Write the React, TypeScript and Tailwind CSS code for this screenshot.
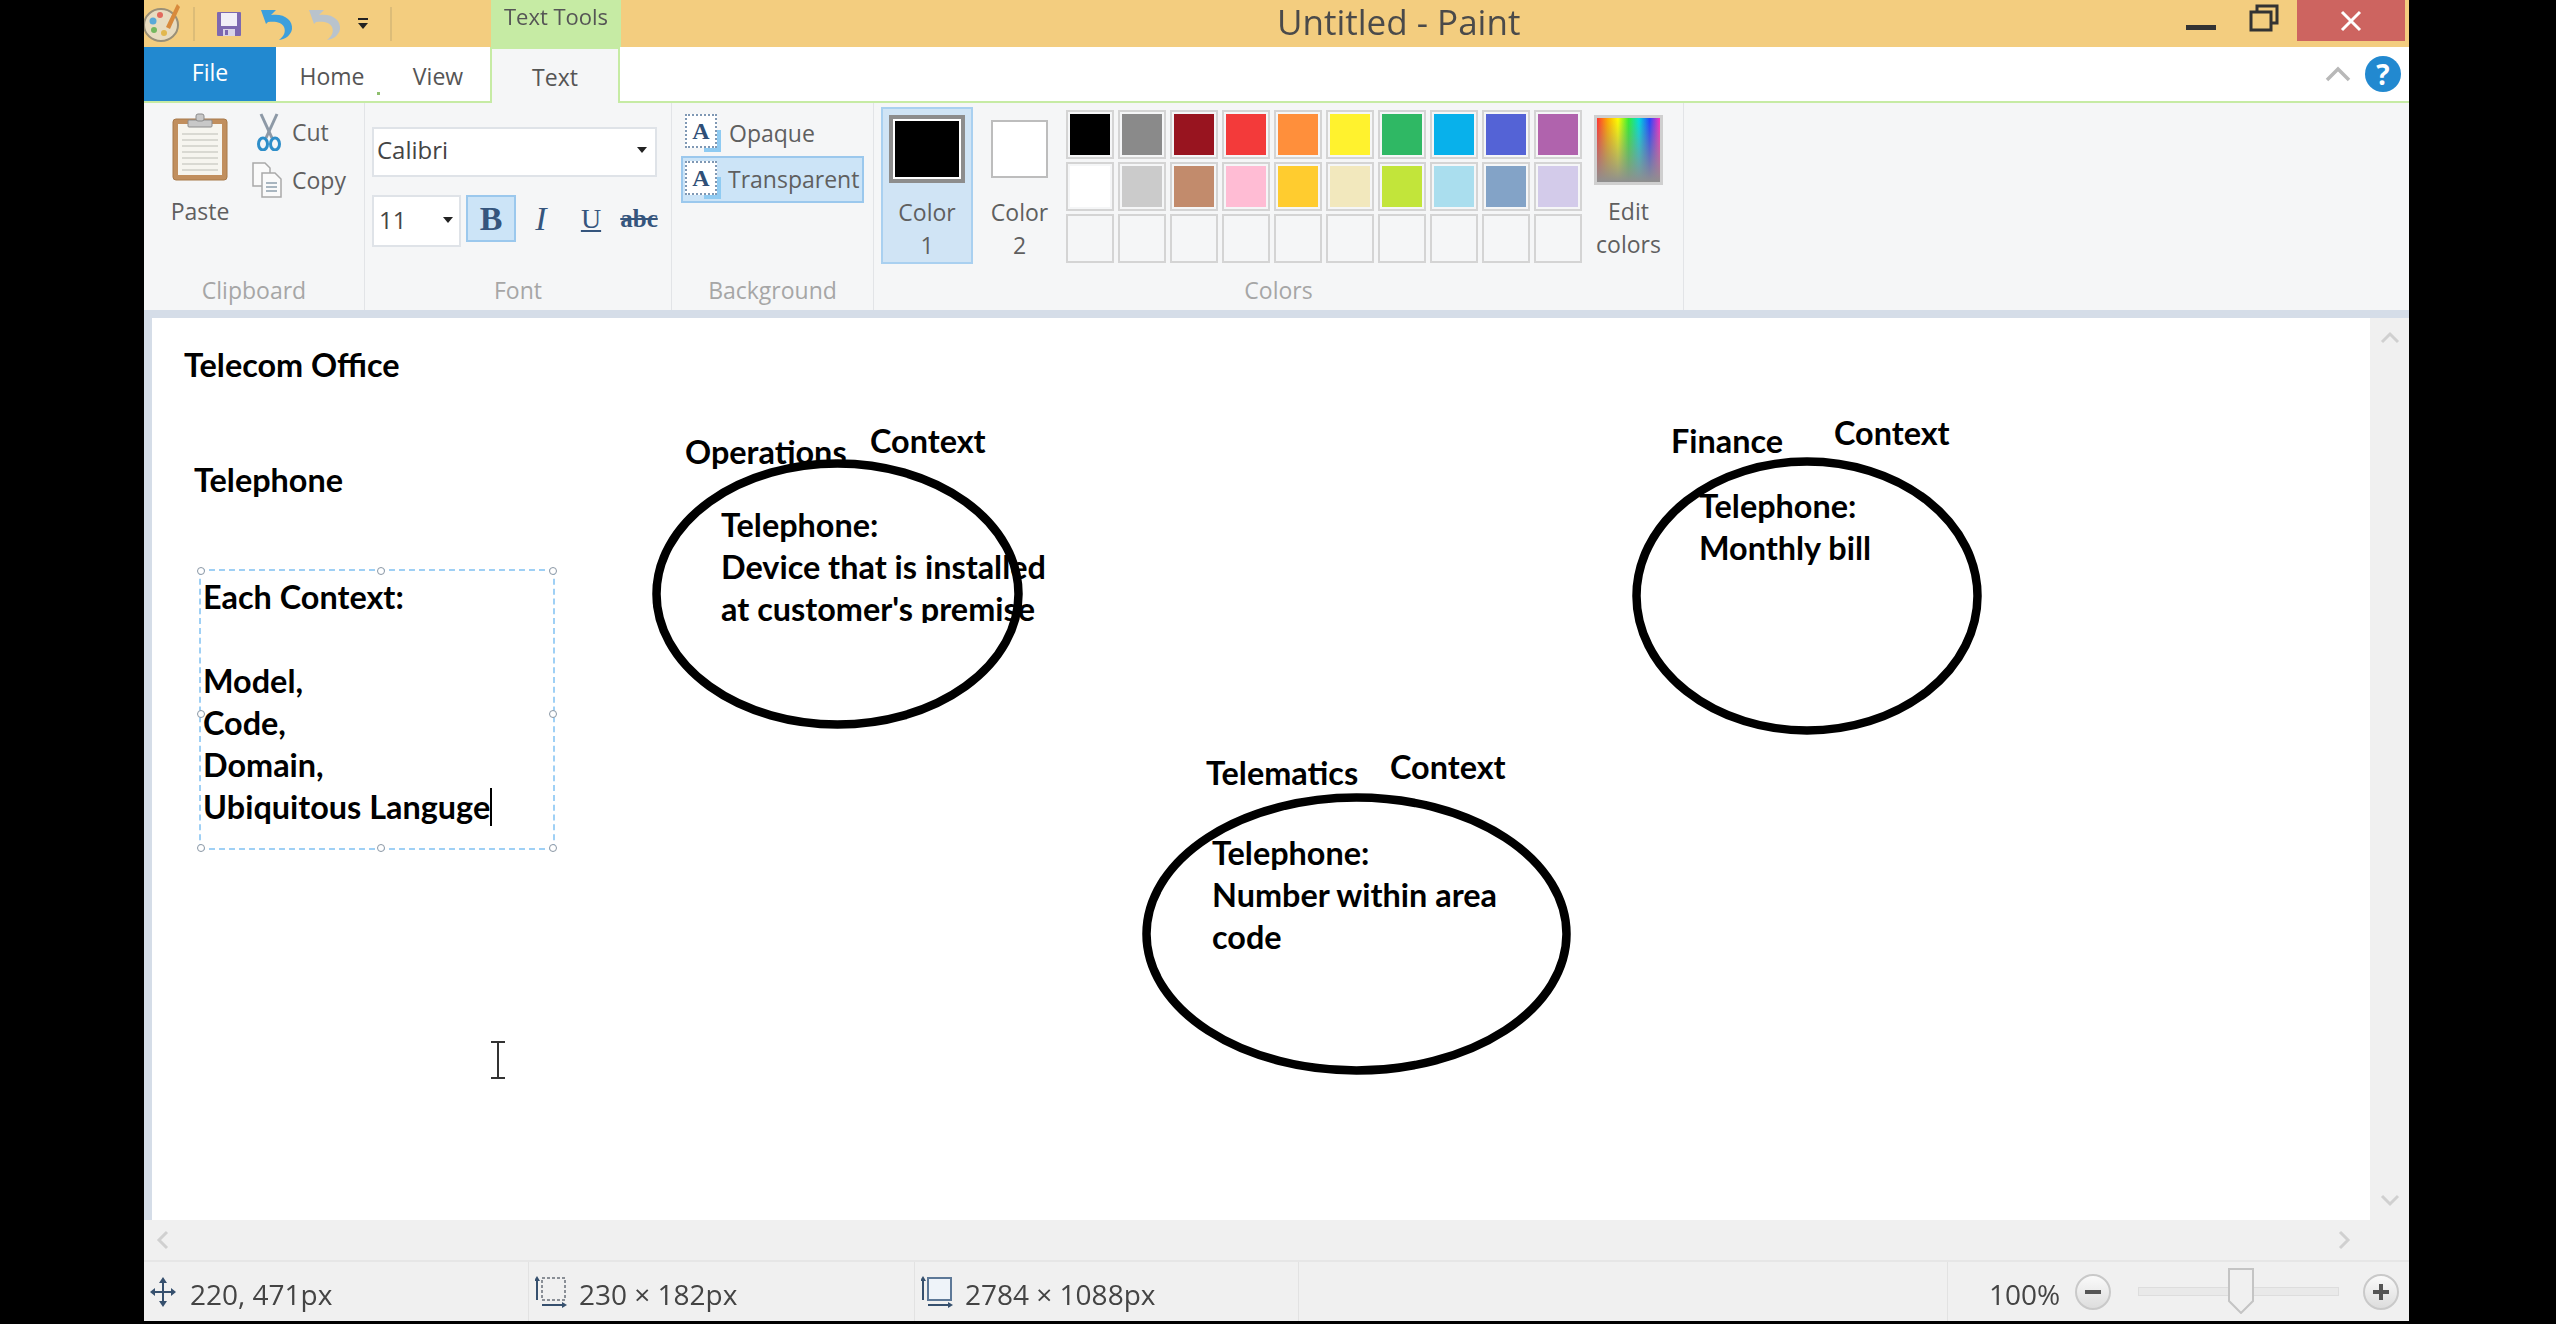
const UI_FONT = { fontFamily: '"Open Sans", "Noto Sans", sans-serif' };

const PALETTE = [
  ["#000000", "#8a8a8a", "#98141f", "#f33a3a", "#ff8f3b", "#fff22e", "#2fb864", "#08b1eb", "#5463d6", "#b063ad"],
  ["#ffffff", "#cbcbcb", "#c28b6c", "#ffbcd4", "#ffcc2f", "#f2e8bd", "#c2e53a", "#aadeee", "#83a3c7", "#d3cbea"],
  Array(10).fill("#f5f6f7") as string[],
];

function PaletteIcon() {
  return (
    <svg width="38" height="44" viewBox="0 0 38 44" className="mt-[-2px]">
      <ellipse cx="17" cy="24" rx="17" ry="16" fill="#e8dcc0" stroke="#9a9078" strokeWidth="2" />
      <circle cx="9" cy="20" r="3.5" fill="#5aa9d8" />
      <circle cx="16" cy="14" r="3" fill="#e26a5c" />
      <circle cx="10" cy="29" r="3" fill="#75b85e" />
      <circle cx="20" cy="32" r="3" fill="#e2b84e" />
      <path d="M33 3 L22 26 L26 28 L36 6 Z" fill="#d88a3c" />
    </svg>
  );
}

function SaveIcon() {
  return (
    <svg width="26" height="26" viewBox="0 0 26 26">
      <rect x="1" y="1" width="24" height="24" rx="1" fill="#7d68b0" />
      <rect x="5" y="2" width="16" height="13" fill="#f1eef8" />
      <rect x="7" y="18" width="12" height="7" fill="#d9d3e8" />
      <rect x="9" y="19" width="3" height="5" fill="#7d68b0" />
    </svg>
  );
}

function UndoIcon({ color }: { color: string }) {
  return (
    <svg width="34" height="34" viewBox="0 0 34 34">
      <path d="M1 3 L16 3 L11 8 C24 6 33 13 32 22 C31 28 26 32 19 33 C24 29 26 25 24 20 C22 15 15 14 8 15 L6 17 Z" fill={color} />
    </svg>
  );
}

function ClipboardIcon() {
  return (
    <svg width="56" height="68" viewBox="0 0 56 68">
      <rect x="1" y="6" width="54" height="61" rx="3" fill="#c18f5e" stroke="#a87a4b" />
      <rect x="6" y="11" width="44" height="51" fill="#f6f5ef" />
      {[20, 26, 32, 38, 44, 50, 56].map((y) => (
        <rect key={y} x="10" y={y} width="36" height="2" fill="#d9d9d2" />
      ))}
      <rect x="16" y="7" width="24" height="7" rx="1" fill="#c8c8c8" stroke="#8c8c8c" />
      <rect x="24" y="1" width="8" height="7" rx="2" fill="#c8c8c8" stroke="#8c8c8c" />
    </svg>
  );
}

function ScissorsIcon() {
  return (
    <svg width="26" height="38" viewBox="0 0 26 38" fill="none">
      <path d="M5 1 L16 25" stroke="#8d99a6" strokeWidth="3" />
      <path d="M21 1 L10 25" stroke="#8d99a6" strokeWidth="3" />
      <ellipse cx="7" cy="31" rx="4.5" ry="6" stroke="#2e8ec9" strokeWidth="3" />
      <ellipse cx="19" cy="31" rx="4.5" ry="6" stroke="#2e8ec9" strokeWidth="3" />
    </svg>
  );
}

function CopyIcon() {
  return (
    <svg width="30" height="36" viewBox="0 0 30 36" fill="#fafafa" stroke="#a9a9a9" strokeWidth="1.5">
      <path d="M1 1 H13 L18 6 V24 H1 Z" />
      <path d="M10 11 H23 L29 17 V35 H10 Z" />
      <path d="M14 21 H25 M14 25 H25 M14 29 H25" stroke="#8fa0ad" />
    </svg>
  );
}

function BackgroundIcon() {
  return (
    <div className="relative w-[36px] h-[38px] shrink-0">
      <div className="absolute right-0 bottom-0 w-[17px] h-[22px] bg-[#8fcbf2]" />
      <div className="absolute left-0 top-0 w-[32px] h-[34px] border-2 border-dotted border-[#7f98b4] bg-[#ffffff] flex items-center justify-center text-[24px] leading-none font-bold text-[#2f4f77]" style={{ fontFamily: '"Liberation Serif", serif' }}>
        A
      </div>
    </div>
  );
}

function MoveIcon() {
  return (
    <svg width="26" height="30" viewBox="0 0 26 30" fill="#36506e">
      <rect x="12" y="4" width="2" height="22" />
      <rect x="2" y="14" width="22" height="2" />
      <path d="M13 0 L17 6 H9 Z M13 30 L9 24 H17 Z M0 15 L5 11 V19 Z M26 15 L21 19 V11 Z" />
    </svg>
  );
}

function SizeIcon({ dashed }: { dashed?: boolean }) {
  return (
    <svg width="32" height="32" viewBox="0 0 32 32" fill="none">
      <rect x="7" y="2" width="23" height="22" fill={dashed ? "none" : "#eef3f9"} stroke={dashed ? "#8a8f96" : "#5d7897"} strokeWidth="2" strokeDasharray={dashed ? "3 2" : undefined} />
      <path d="M2 3 V24" stroke="#36506e" strokeWidth="2" />
      <path d="M2 0 L5 5 H-1 Z" fill="#36506e" />
      <path d="M7 29 H30" stroke="#36506e" strokeWidth="2" />
      <path d="M32 29 L27 26 V32 Z" fill="#36506e" />
    </svg>
  );
}

function Group({ width, label, children }: { width: string; label: string; children: React.ReactNode }) {
  return (
    <div className={`${width} h-full flex flex-col border-r border-[#e2e4e7] shrink-0`}>
      <div className="flex-1 relative min-h-0">{children}</div>
      <div className="h-[36px] text-[23px] leading-[30px] pt-[1px] text-center text-[#a6a6a6]">{label}</div>
    </div>
  );
}

function Caret() {
  return <div className="w-0 h-0 border-x-[5px] border-x-transparent border-t-[6px] border-t-[#222222]" />;
}

function Ribbon() {
  return (
    <div className="h-[207px] bg-[#f5f6f7] flex text-[23px] text-[#5f5f5f] leading-none">
      <Group width="w-[221px]" label="Clipboard">
        <div className="flex pl-[28px] pt-[10px] gap-[28px]">
          <div className="flex flex-col items-center w-[56px]">
            <ClipboardIcon />
            <span className="mt-[19px]">Paste</span>
          </div>
          <div className="flex flex-col -mt-[5px]">
            <div className="h-[48px] flex items-center gap-[10px]">
              <ScissorsIcon />
              <span>Cut</span>
            </div>
            <div className="h-[48px] flex items-center gap-[10px] -ml-[4px]">
              <CopyIcon />
              <span>Copy</span>
            </div>
          </div>
        </div>
      </Group>
      <Group width="w-[307px]" label="Font">
        <div className="pl-[7px] pt-[24px]">
          <div className="w-[285px] h-[50px] border-2 border-[#dfe3e8] bg-white flex items-center justify-between pl-[3px] pr-[8px] pb-[5px]">
            <span className="text-[24px] text-[#444444]">Calibri</span>
            <Caret />
          </div>
          <div className="flex mt-[18px] items-start">
            <div className="w-[89px] h-[52px] border-2 border-[#dfe3e8] bg-white flex items-center justify-between pl-[5px] pr-[6px] pb-[2px]">
              <span className="text-[24px] text-[#444444]">11</span>
              <Caret />
            </div>
            <div className="ml-[5px] w-[50px] h-[47px] bg-[#cce4f7] border-2 border-[#9bc8ed] flex items-center justify-center text-[34px] font-bold text-[#35557d]" style={{ fontFamily: '"Liberation Serif", serif' }}>B</div>
            <div className="w-[50px] h-[47px] flex items-center justify-center text-[34px] italic text-[#35557d]" style={{ fontFamily: '"Liberation Serif", serif' }}>I</div>
            <div className="w-[50px] h-[47px] flex items-center justify-center text-[28px] underline text-[#35557d]" style={{ fontFamily: '"Liberation Serif", serif' }}>U</div>
            <div className="w-[50px] h-[47px] flex items-center justify-center text-[25px] font-bold line-through text-[#35557d] -ml-[2px]" style={{ fontFamily: '"Liberation Serif", serif' }}>abc</div>
          </div>
        </div>
      </Group>
      <Group width="w-[202px]" label="Background">
        <div className="pl-[9px] pt-[8px]">
          <div className="h-[44px] flex items-center gap-[8px] pl-[4px] w-[183px]">
            <BackgroundIcon />
            <span>Opaque</span>
          </div>
          <div className="h-[47px] mt-[1px] flex items-center gap-[7px] pl-[2px] w-[183px] bg-[#cce4f7] border-2 border-[#9bc8ed]">
            <BackgroundIcon />
            <span>Transparent</span>
          </div>
        </div>
      </Group>
      <Group width="w-[810px]" label="Colors">
        <div className="flex pl-[7px] pt-[4px] items-start">
          <div className="w-[92px] h-[157px] bg-[#d0e4f5] border-2 border-[#a9d0f0] flex flex-col items-center pt-[6px]">
            <div className="w-[76px] h-[76px] border-[4px] border-[#8d8d8d] bg-white p-[2px]">
              <div className="w-full h-full bg-black" />
            </div>
            <span className="mt-[13px] leading-[33px]">Color</span>
            <span className="leading-[33px]">1</span>
          </div>
          <div className="w-[93px] h-[157px] flex flex-col items-center pt-[13px]">
            <div className="w-[57px] h-[58px] border-2 border-[#bdbdbd] bg-white" />
            <span className="mt-[18px] leading-[33px]">Color</span>
            <span className="leading-[33px]">2</span>
          </div>
          <div className="flex flex-col gap-[3px] pt-[3px]">
            {PALETTE.map((row, i) => (
              <div key={i} className="flex gap-[4px]">
                {row.map((color, j) => (
                  <div key={j} className="w-[48px] h-[49px] border-2 border-[#d4d4d4] p-[2px]">
                    <div className="w-full h-full" style={{ backgroundColor: color }} />
                  </div>
                ))}
              </div>
            ))}
          </div>
          <div className="w-[69px] ml-[12px] flex flex-col items-center pt-[8px]">
            <div className="w-[69px] h-[70px] border-[3px] border-[#cfcfcf] bg-[linear-gradient(to_bottom,transparent,#8f8f8f),linear-gradient(to_right,#f33,#fa0,#ff0,#3e3,#0dd,#24f,#f3b)]" />
            <span className="mt-[10px] leading-[33px]">Edit</span>
            <span className="leading-[33px]">colors</span>
          </div>
        </div>
      </Group>
      <div className="flex-1" />
    </div>
  );
}

const TEXT_ITEMS = [
  { left: "left-[32px]", top: "top-[26px]", text: "Telecom Office" },
  { left: "left-[42px]", top: "top-[141px]", text: "Telephone" },
  { left: "left-[533px]", top: "top-[113px]", text: "Operations" },
  { left: "left-[718px]", top: "top-[102px]", text: "Context" },
  { left: "left-[1519px]", top: "top-[102px]", text: "Finance" },
  { left: "left-[1682px]", top: "top-[94px]", text: "Context" },
  { left: "left-[1054px]", top: "top-[434px]", text: "Telematics" },
  { left: "left-[1238px]", top: "top-[428px]", text: "Context" },
];

function Ellipse({ className, width, height }: { className: string; width: number; height: number }) {
  return (
    <svg width={width} height={height} className={`absolute ${className}`}>
      <ellipse cx={width / 2} cy={height / 2} rx={width / 2 - 4.5} ry={height / 2 - 4.5} fill="none" stroke="#000" strokeWidth="8.5" />
    </svg>
  );
}

function Canvas() {
  const handles = ["left-[-4px] top-[-4px]", "left-1/2 top-[-4px]", "right-[-4px] top-[-4px]", "left-[-4px] top-1/2", "right-[-4px] top-1/2", "left-[-4px] bottom-[-4px]", "left-1/2 bottom-[-4px]", "right-[-4px] bottom-[-4px]"];
  return (
    <div className="relative flex-1 bg-white overflow-hidden text-[32.4px] leading-[42px] font-bold text-black" style={{ fontFamily: 'Lato, "Liberation Sans", sans-serif' }}>
      {TEXT_ITEMS.map((item) => (
        <div key={item.text + item.left} className={`absolute whitespace-nowrap ${item.left} ${item.top}`}>{item.text}</div>
      ))}

      {/* pasted text is cut off by its own box, as in the drawing */}
      <div className="absolute left-[569px] top-[186px] h-[119px] overflow-hidden whitespace-nowrap">
        <div>Telephone:</div>
        <div>Device that is installed</div>
        <div>at customer's premise</div>
      </div>
      <Ellipse className="left-[500px] top-[141px]" width={371} height={270} />

      <div className="absolute left-[1547px] top-[167px] whitespace-nowrap">
        <div>Telephone:</div>
        <div>Monthly bill</div>
      </div>
      <Ellipse className="left-[1480px] top-[139px]" width={350} height={278} />

      <div className="absolute left-[1060px] top-[514px] whitespace-nowrap">
        <div>Telephone:</div>
        <div>Number within area</div>
        <div>code</div>
      </div>
      <Ellipse className="left-[990px] top-[475px]" width={429} height={282} />

      {/* text box being edited */}
      <div className="absolute left-[47px] top-[251px] w-[356px] h-[281px] border-2 border-dashed border-[#9fd0f5] pl-[2px] pt-[5px]">
        <div>Each Context:</div>
        <div className="h-[42px]" />
        <div>Model,</div>
        <div>Code,</div>
        <div>Domain,</div>
        <div className="flex items-center">
          <span>Ubiquitous Languge</span>
          <span className="w-[2px] h-[38px] bg-black" />
        </div>
        {handles.map((pos) => (
          <div key={pos} className={`absolute w-[8px] h-[8px] rounded-full border border-[#8a97a5] bg-white ${pos}`} />
        ))}
      </div>

      {/* mouse cursor */}
      <svg width="18" height="38" viewBox="0 0 18 38" className="absolute left-[337px] top-[723px]" fill="none" stroke="#333" strokeWidth="2">
        <path d="M2 1 H16 M2 37 H16 M9 1 V37" />
      </svg>
    </div>
  );
}

function Chevron({ d }: { d: string }) {
  return (
    <svg width="20" height="20" viewBox="0 0 20 20" fill="none" stroke="#d0d0d0" strokeWidth="3">
      <path d={d} />
    </svg>
  );
}

function ZoomButton({ plus }: { plus?: boolean }) {
  return (
    <div className="w-[36px] h-[36px] rounded-full border-2 border-[#c9c9c9] bg-[linear-gradient(to_bottom,#fafafa,#dddddd)] flex items-center justify-center relative">
      <div className="w-[16px] h-[4px] bg-[#555555]" />
      {plus && <div className="absolute w-[4px] h-[16px] bg-[#555555]" />}
    </div>
  );
}

function StatusBar() {
  return (
    <div className="h-[61px] bg-[#f0f0f0] border-t-2 border-[#e6e6e6] flex items-stretch text-[28px] text-[#444444] leading-none">
      <div className="w-[385px] border-r border-[#e2e2e2] flex items-center pl-[6px] gap-[14px]">
        <MoveIcon />
        <span className="pt-[4px]">220, 471px</span>
      </div>
      <div className="w-[386px] border-r border-[#e2e2e2] flex items-center pl-[6px] gap-[12px]">
        <SizeIcon dashed />
        <span className="pt-[4px]">230 × 182px</span>
      </div>
      <div className="w-[384px] border-r border-[#e2e2e2] flex items-center pl-[6px] gap-[12px]">
        <SizeIcon />
        <span className="pt-[4px]">2784 × 1088px</span>
      </div>
      <div className="w-[649px] border-r border-[#e2e2e2]" />
      <div className="flex-1 flex items-center pl-[41px]">
        <span className="w-[86px] pt-[4px]">100%</span>
        <ZoomButton />
        <div className="ml-[27px] w-[201px] h-[9px] bg-[#e9e9e9] border border-[#dddddd] relative flex justify-center">
          <svg width="26" height="46" viewBox="0 0 26 46" className="absolute top-[-20px] left-[89px]">
            <path d="M1 1 H25 V33 L13 45 L1 33 Z" fill="#f0f0f0" stroke="#c4c4c4" strokeWidth="2" />
          </svg>
        </div>
        <div className="ml-[24px]">
          <ZoomButton plus />
        </div>
      </div>
    </div>
  );
}

export default function App() {
  return (
    <div className="w-[2556px] h-[1324px] bg-black flex overflow-hidden">
      <div className="w-[144px] shrink-0" />
      <div className="w-[2265px] h-[1321px] flex flex-col bg-[#f0f0f0] blur-[0.5px]" style={UI_FONT}>
        {/* title bar */}
        <div className="h-[47px] bg-[#f3cd7f] flex items-center shrink-0">
          <PaletteIcon />
          <div className="w-[2px] h-[34px] bg-[#dcbc78] ml-[11px]" />
          <div className="ml-[21px]"><SaveIcon /></div>
          <div className="ml-[18px]"><UndoIcon color="#3c9fdc" /></div>
          <div className="ml-[14px]"><UndoIcon color="#b9c3cc" /></div>
          <div className="ml-[16px] flex flex-col items-center gap-[3px]">
            <div className="w-[10px] h-[2px] bg-[#222222]" />
            <Caret />
          </div>
          <div className="w-[2px] h-[34px] bg-[#dcbc78] ml-[22px]" />
          <div className="ml-[99px] w-[130px] h-full bg-[#c6eba4] text-center text-[22px] leading-[33px] text-[#555555]">Text Tools</div>
          <div className="ml-[656px] text-[35px] text-[#4a4a4a] leading-[47px] h-full -mt-[4px]">Untitled - Paint</div>
          <div className="ml-auto flex h-full items-start">
            <div className="w-[30px] h-[5px] bg-[#333333] mt-[25px]" />
            <svg width="30" height="28" viewBox="0 0 30 28" fill="none" stroke="#333" strokeWidth="3" className="ml-[33px] mt-[4px]">
              <rect x="2" y="8" width="20" height="18" />
              <path d="M8 7 V2 H28 V19 H23" />
            </svg>
            <div className="ml-[18px] mr-[4px] w-[108px] h-[41px] bg-[#cd6460] flex items-center justify-center text-white text-[30px]">
              <svg width="22" height="22" viewBox="0 0 22 22" stroke="#fff" strokeWidth="3">
                <path d="M2 2 L20 20 M20 2 L2 20" />
              </svg>
            </div>
          </div>
        </div>

        {/* tabs */}
        <div className="h-[56px] bg-white flex shrink-0 border-b-2 border-[#c6eba4] text-[23px] text-[#555555]">
          <div className="w-[132px] h-[54px] bg-[#2289d0] text-white flex items-center justify-center pb-[4px]">File</div>
          <div className="relative w-[110px] flex items-center justify-center ml-[1px] pt-[5px]">
            Home
            <div className="absolute right-[7px] bottom-[6px] w-[3px] h-[3px] bg-[#8fbf6f]" />
          </div>
          <div className="w-[102px] flex items-center justify-center pt-[5px]">View</div>
          <div className="ml-[1px] w-[130px] h-[56px] bg-[#f5f6f7] border-x-2 border-t-2 border-[#c6eba4] flex items-center justify-center pt-[3px]">Text</div>
          <div className="ml-auto flex items-center gap-[14px] mr-[8px]">
            <svg width="26" height="16" viewBox="0 0 26 16" fill="none" stroke="#b8b8b8" strokeWidth="3.5">
              <path d="M2 14 L13 3 L24 14" />
            </svg>
            <div className="w-[36px] h-[36px] rounded-full bg-[#2289d0] text-white font-bold text-[28px] flex items-center justify-center leading-none">?</div>
          </div>
        </div>

        <Ribbon />
        <div className="h-[8px] bg-[#d5dde8] shrink-0" />

        {/* drawing area */}
        <div className="flex-1 flex min-h-0 bg-[#f0f0f0]">
          <div className="w-[8px] bg-[#d5dde8] shrink-0" />
          <Canvas />
          <div className="w-[39px] shrink-0 flex flex-col items-center justify-between py-[10px]">
            <Chevron d="M2 14 L10 6 L18 14" />
            <Chevron d="M2 6 L10 14 L18 6" />
          </div>
        </div>

        <div className="h-[40px] shrink-0 flex items-center justify-between pl-[9px] pr-[55px]">
          <Chevron d="M14 2 L6 10 L14 18" />
          <Chevron d="M6 2 L14 10 L6 18" />
        </div>
        <StatusBar />
      </div>
    </div>
  );
}
